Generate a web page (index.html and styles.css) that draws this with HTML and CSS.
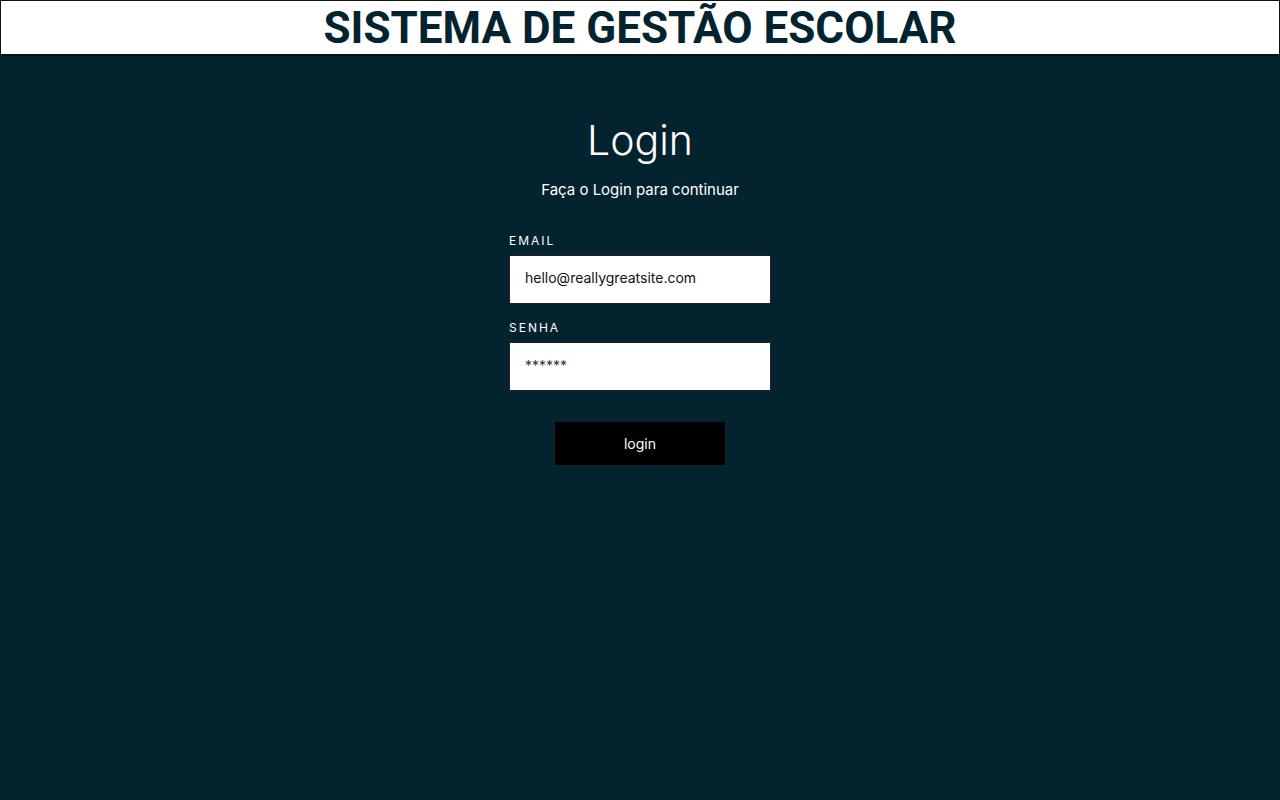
FILE: index.html
```html
<!DOCTYPE html>
<html lang="pt-BR">
<head>
<meta charset="utf-8">
<title>Sistema de Gestão Escolar</title>
<link rel="stylesheet" href="styles.css">
</head>
<body>
<header class="topbar">
  <h1 class="brand">SISTEMA DE GESTÃO ESCOLAR</h1>
</header>
<main class="login">
  <h2 class="login-title">Login</h2>
  <p class="login-sub">Faça o Login para continuar</p>
  <form class="login-form">
    <label class="field-label" for="email">EMAIL</label>
    <div class="field">hello@reallygreatsite.com</div>
    <label class="field-label" for="senha">SENHA</label>
    <div class="field field-pass">******</div>
    <button type="button" class="btn">login</button>
  </form>
</main>
</body>
</html>
```

FILE: styles.css
```css
* { box-sizing: border-box; }
html, body { margin: 0; padding: 0; }
body {
  background: #03232f;
  width: 1280px;
  height: 800px;
  font-family: Inter, "Liberation Sans", sans-serif;
  color: #fff;
  overflow: hidden;
}
.topbar {
  height: 56px;
  background: #fff;
  border: 1px solid #111;
  border-bottom-width: 2px;
  display: flex;
  align-items: center;
  justify-content: center;
}
.brand {
  margin: 0;
  font-family: Roboto, "Liberation Sans", sans-serif;
  font-weight: 700;
  font-size: 44px;
  line-height: 52px;
  color: #03232f;
  letter-spacing: 0;
}
.login {
  display: flex;
  flex-direction: column;
  align-items: center;
  padding-top: 60px;
}
.login-title {
  margin: 0;
  font-weight: 300;
  font-size: 41px;
  line-height: 48px;
}
.login-sub {
  margin: 16px 0 0;
  font-size: 15px;
  line-height: 20px;
}
.login-form {
  width: 262px;
  margin-top: 33px;
  display: flex;
  flex-direction: column;
}
.field-label {
  font-size: 12px;
  letter-spacing: 2px;
  line-height: 16px;
  margin-bottom: 6px;
}
.field {
  height: 49px;
  background: #fff;
  border: 1px solid #222;
  color: #111;
  font-size: 14px;
  padding: 0 15px;
  display: flex;
  align-items: flex-start;
  padding-top: 13px;
  margin-bottom: 16px;
}
.field-pass {
  color: #333;
  padding-top: 14px;
  margin-bottom: 31px;
}
.btn {
  align-self: center;
  width: 170px;
  height: 43px;
  background: #000;
  border: none;
  color: #fff;
  font-family: Inter, "Liberation Sans", sans-serif;
  font-size: 14px;
}
```
